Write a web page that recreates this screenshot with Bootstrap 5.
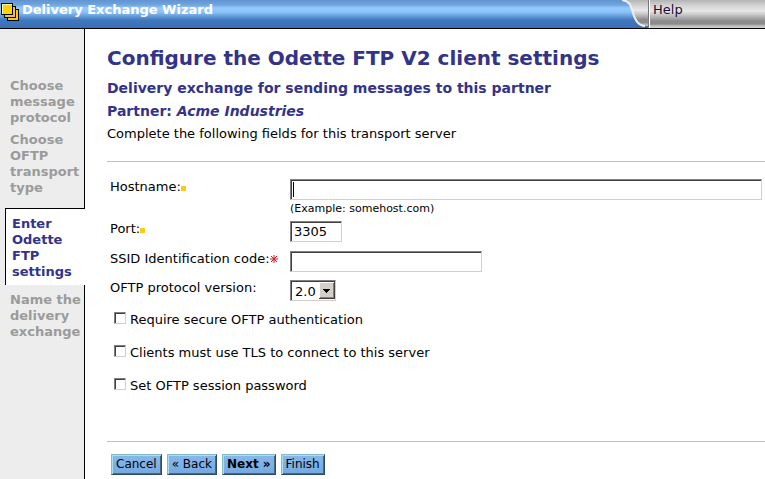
<!DOCTYPE html>
<html lang="en">
<head>
<meta charset="utf-8">
<meta name="viewport" content="width=device-width, initial-scale=1">
<title>Delivery Exchange Wizard</title>
<link href="https://cdn.jsdelivr.net/npm/bootstrap@5.3.0/dist/css/bootstrap.min.css" rel="stylesheet">
<style>
  body { font-family: Verdana, "DejaVu Sans", sans-serif; font-size: 13px; line-height: 16px; color: #000; background: #fff; }
  .topbar { height: 29px; border-bottom: 1px solid #000; background: linear-gradient(#6193d0 0, #70a5df 5px, #94caff 8px, #8dc3fa 12px, #4078be 20px, #386fb7 28px); }
  .topbar-title { font-size: 13px; line-height: 20px; font-weight: bold; color: #fff; padding-left: 2px; }
  .logo { width: 20px; height: 28px; }
  .swoosh { width: 26px; height: 28px; }
  .help-area { width: 117px; background: linear-gradient(#b4b4b4 0, #d0d0d0 5px, #e8e8e8 11px, #c4c4c4 15px, #8c8c8c 21px, #8c8c8c 24px, #c0c0c0 26px, #d0d0d0 28px); border-left: 1px solid #777; box-shadow: inset 1px 0 #fff; }
  .help-area a { color: #1b0d38; line-height: 19px; padding-left: 4px; }
  .steps { width: 85px; background: #ededed; }
  .step { color: #9b9b9b; font-weight: bold; border-right: 1px solid #000; padding: 0 0 6px 10px; }
  .step.first { padding-top: 49px; }
  .step.before-current { padding-bottom: 12px; }
  .step.after-current { padding-top: 7px; }
  .step.current { color: #333388; background: #fff; margin-left: 5px; padding: 7px 0 5px 6px; border: solid #000; border-width: 1px 0 0 1px; }
  .wizard { padding-left: 22px; }
  h1 { font-size: 20px; line-height: 24px; font-weight: bold; color: #333388; padding-top: 17px; margin-bottom: 7px; }
  h2 { font-size: 14px; line-height: 23px; font-weight: bold; color: #333388; }
  .intro { line-height: 22px; }
  .rule { border: 0; border-top: 1px solid #a5c8dc; opacity: 1; }
  .fields { padding: 17px 3px 47px 3px; }
  .field-label { width: 180px; line-height: 16px; }
  .inset-box { height: 21px; border: 1px solid; border-color: #808080 #d4d0c8 #d4d0c8 #808080; box-shadow: inset 1px 1px #404040; border-radius: 0; background-color: #fff; padding: 1px 3px; font-size: 13px; line-height: 17px; color: #000; }
  .caret-shown { background: linear-gradient(#000, #000) no-repeat 2px 2px / 1px 15px; }
  .port-box { width: 52px; }
  .code-box { width: 192px; }
  .version-box { width: 46px; appearance: none; padding: 1px 16px 0 4px; background: url("data:image/svg+xml,%3Csvg xmlns='http://www.w3.org/2000/svg' width='16' height='17'%3E%3Cpath fill='%23404040' d='M0 0h16v17H0z'/%3E%3Cpath fill='%23fff' d='M0 0h15v16H0z'/%3E%3Cpath fill='%23808080' d='M1 1h14v15H1z'/%3E%3Cpath fill='%23d4d0c8' d='M1 1h13v14H1z'/%3E%3Cpath d='M4 7h7v1H4zM5 8h5v1H5zM6 9h3v1H6zM7 10h1v1H7z'/%3E%3C/svg%3E") no-repeat right 0 top 1px #fff; }
  .hint { font-size: 11px; line-height: 17px; }
  .code-row { padding-top: 9px; }
  .checks { gap: 17px; padding-top: 11px; }
  .tick { appearance: none; width: 12px; height: 12px; border: 1px solid; border-color: #808080 #d4d0c8 #d4d0c8 #808080; box-shadow: inset 1px 1px #404040; background: #fff; }
  .tick:checked { background: #338; }
  .flag { width: 5px; height: 5px; background: #f9cc1c; }
  .actions { gap: 5px; padding-top: 12px; }
  .push { height: 21px; border: 1px solid; border-color: #82bcc4 #304c58 #304c58 #82bcc4; border-radius: 0; box-shadow: inset 1px 1px #a5dff0, inset -1px -1px #48697d; background: linear-gradient(#86b8ec, #75a9e0); color: #000; font-size: 12px; line-height: 19px; padding: 0 4px; }
</style>
</head>
<body class="d-flex flex-column min-vh-100">
<header class="topbar d-flex">
  <svg class="logo flex-shrink-0" viewBox="0 0 20 28" shape-rendering="crispEdges" aria-hidden="true">
    <path d="M7 9h12v12H7zM4 6h12v12H4zM1 3h12v12H1z"/>
    <path d="M16 10h2v10H8v-2h8zM13 7h2v10H5v-2h8z" fill="#f4c430"/>
    <path d="M2 4h10v10H2z" fill="#fff2a0"/>
    <path d="M3 5h9v9H3z" fill="#ffd200"/>
  </svg>
  <div class="topbar-title flex-grow-1 text-nowrap">Delivery Exchange Wizard</div>
  <svg class="swoosh flex-shrink-0" viewBox="0 0 26 28" aria-hidden="true">
    <defs><linearGradient id="metal" x1="0" y1="0" x2="0" y2="1"><stop offset="0" stop-color="#b4b4b4"/><stop offset=".2" stop-color="#d0d0d0"/><stop offset=".4" stop-color="#e8e8e8"/><stop offset=".55" stop-color="#c4c4c4"/><stop offset=".75" stop-color="#8c8c8c"/><stop offset=".86" stop-color="#8c8c8c"/><stop offset="1" stop-color="#d0d0d0"/></linearGradient></defs>
    <path d="M0 0C8 1 9 6 11 13S16 26 23 26H26V0z" fill="url(#metal)"/>
    <path d="M0 0C8 1 9 6 11 13S16 26 23 26" fill="none" stroke="#eee" stroke-width="2"/>
  </svg>
  <nav class="help-area flex-shrink-0"><a class="d-block text-decoration-none" href="#">Help</a></nav>
</header>
<div class="d-flex flex-grow-1">
  <aside class="steps d-flex flex-column flex-shrink-0">
    <div class="step first">Choose message protocol</div>
    <div class="step before-current">Choose OFTP transport type</div>
    <div class="step current" aria-current="step">Enter Odette FTP settings</div>
    <div class="step after-current flex-grow-1">Name the delivery exchange</div>
  </aside>
  <main class="wizard flex-grow-1">
    <h1>Configure the Odette FTP V2 client settings</h1>
    <h2 class="mb-0">Delivery exchange for sending messages to this partner</h2>
    <h2 class="mb-0">Partner: <em>Acme Industries</em></h2>
    <p class="intro mb-3">Complete the following fields for this transport server</p>
    <hr class="rule m-0">
    <form>
      <div class="fields">
        <div class="d-flex">
          <label class="field-label flex-shrink-0" for="host">Hostname:<span class="flag d-inline-block"></span></label>
          <div class="flex-grow-1">
            <input class="inset-box caret-shown d-block w-100" id="host" type="text">
            <div class="hint">(Example: somehost.com)</div>
          </div>
        </div>
        <div class="d-flex pt-1">
          <label class="field-label flex-shrink-0" for="port">Port:<span class="flag d-inline-block"></span></label>
          <input class="inset-box port-box" id="port" type="text" value="3305">
        </div>
        <div class="code-row d-flex">
          <label class="field-label flex-shrink-0 text-nowrap" for="code">SSID Identification code:<svg class="align-baseline" width="8" height="8" viewBox="0 0 8 8" aria-hidden="true"><path d="M4 0v8M0 4h8M1 1l6 6M7 1L1 7" stroke="#dc1414"/></svg></label>
          <input class="inset-box code-box" id="code" type="text">
        </div>
        <div class="d-flex pt-2">
          <label class="field-label flex-shrink-0" for="version">OFTP protocol version:</label>
          <select class="inset-box version-box" id="version"><option>2.0</option></select>
        </div>
        <div class="checks d-flex flex-column ps-1">
          <div class="d-flex gap-1"><input class="tick" type="checkbox" id="auth"><label for="auth">Require secure OFTP authentication</label></div>
          <div class="d-flex gap-1"><input class="tick" type="checkbox" id="tls"><label for="tls">Clients must use TLS to connect to this server</label></div>
          <div class="d-flex gap-1"><input class="tick" type="checkbox" id="pass"><label for="pass">Set OFTP session password</label></div>
        </div>
      </div>
      <hr class="rule m-0">
      <div class="actions d-flex ps-1">
        <button class="push" type="button">Cancel</button>
        <button class="push" type="button">« Back</button>
        <button class="push fw-bold" type="button">Next »</button>
        <button class="push" type="button">Finish</button>
      </div>
    </form>
  </main>
</div>
<script src="https://cdn.jsdelivr.net/npm/bootstrap@5.3.0/dist/js/bootstrap.bundle.min.js"></script>
</body>
</html>
